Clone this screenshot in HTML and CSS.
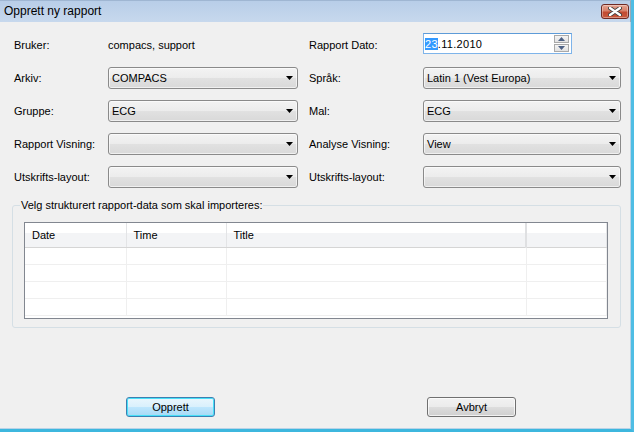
FILE: index.html
```html
<!DOCTYPE html>
<html lang="no">
<head>
<meta charset="utf-8">
<title>Opprett ny rapport</title>
<link rel="stylesheet" href="styles.css">
</head>
<body>
<div class="window">
  <div class="titlebar">
    <span class="title">Opprett ny rapport</span>
    <button class="close" aria-label="Lukk">
      <svg width="14" height="9" viewBox="0 0 14 9">
        <path d="M2 1 L12 8 M12 1 L2 8" stroke="#3a3a3a" stroke-width="4" stroke-linecap="round"/>
        <path d="M2 1 L12 8 M12 1 L2 8" stroke="#ffffff" stroke-width="2.4" stroke-linecap="round"/>
      </svg>
    </button>
  </div>
  <div class="content">
    <div class="form">
      <span class="label">Bruker:</span>
      <span class="value">compacs, support</span>
      <span class="label rlabel">Rapport Dato:</span>
      <div class="datefield">
        <span class="datetext"><span class="sel">23</span>.11.2010</span>
        <span class="spin">
          <span class="spinbtn"><svg width="7" height="4" viewBox="0 0 7 4"><polygon points="0,4 7,4 3.5,0" fill="#4d6185"/></svg></span>
          <span class="spinbtn"><svg width="7" height="4" viewBox="0 0 7 4"><polygon points="0,0 7,0 3.5,4" fill="#4d6185"/></svg></span>
        </span>
      </div>

      <span class="label">Arkiv:</span>
      <div class="combo"><span class="ctext">COMPACS</span><svg class="arrow" width="7" height="4" viewBox="0 0 7 4"><polygon points="0,0 7,0 3.5,4" fill="#000"/></svg></div>
      <span class="label rlabel">Språk:</span>
      <div class="combo"><span class="ctext">Latin 1 (Vest Europa)</span><svg class="arrow" width="7" height="4" viewBox="0 0 7 4"><polygon points="0,0 7,0 3.5,4" fill="#000"/></svg></div>

      <span class="label">Gruppe:</span>
      <div class="combo"><span class="ctext">ECG</span><svg class="arrow" width="7" height="4" viewBox="0 0 7 4"><polygon points="0,0 7,0 3.5,4" fill="#000"/></svg></div>
      <span class="label rlabel">Mal:</span>
      <div class="combo"><span class="ctext">ECG</span><svg class="arrow" width="7" height="4" viewBox="0 0 7 4"><polygon points="0,0 7,0 3.5,4" fill="#000"/></svg></div>

      <span class="label">Rapport Visning:</span>
      <div class="combo"><span class="ctext"></span><svg class="arrow" width="7" height="4" viewBox="0 0 7 4"><polygon points="0,0 7,0 3.5,4" fill="#000"/></svg></div>
      <span class="label rlabel">Analyse Visning:</span>
      <div class="combo"><span class="ctext">View</span><svg class="arrow" width="7" height="4" viewBox="0 0 7 4"><polygon points="0,0 7,0 3.5,4" fill="#000"/></svg></div>

      <span class="label">Utskrifts-layout:</span>
      <div class="combo"><span class="ctext"></span><svg class="arrow" width="7" height="4" viewBox="0 0 7 4"><polygon points="0,0 7,0 3.5,4" fill="#000"/></svg></div>
      <span class="label rlabel">Utskrifts-layout:</span>
      <div class="combo"><span class="ctext"></span><svg class="arrow" width="7" height="4" viewBox="0 0 7 4"><polygon points="0,0 7,0 3.5,4" fill="#000"/></svg></div>
    </div>

    <fieldset class="group">
      <legend>Velg strukturert rapport-data som skal importeres:</legend>
      <div class="list">
        <table>
          <colgroup><col class="c1"><col class="c2"><col class="c3"><col class="c4"></colgroup>
          <thead><tr><th>Date</th><th>Time</th><th>Title</th><th></th></tr></thead>
          <tbody>
            <tr><td></td><td></td><td></td><td></td></tr>
            <tr><td></td><td></td><td></td><td></td></tr>
            <tr><td></td><td></td><td></td><td></td></tr>
            <tr><td></td><td></td><td></td><td></td></tr>
          </tbody>
        </table>
      </div>
    </fieldset>

    <div class="actions">
      <button class="btn default">Opprett</button>
      <button class="btn">Avbryt</button>
    </div>
  </div>
</div>
</body>
</html>
```

FILE: styles.css
```css
* { box-sizing: border-box; }
html, body { margin: 0; padding: 0; }
body {
  width: 634px;
  height: 432px;
  overflow: hidden;
  font-family: "Liberation Sans", Arial, sans-serif;
  font-size: 11px;
  color: #000;
  background: #f0f0f0;
}
.window {
  width: 634px;
  height: 432px;
  display: flex;
  flex-direction: column;
  background: #f0f0f0;
  border-right: 3px solid #4fbde4;
  border-bottom: 3px solid #3db7de;
  box-shadow: inset -1px -1px 0 #b9d3e8;
}
.titlebar {
  height: 22px;
  flex: 0 0 22px;
  display: flex;
  align-items: flex-start;
  justify-content: space-between;
  padding-left: 4px;
  background: linear-gradient(#b8cee8, #c7d8ed);
  border-top: 1px solid #9fb6d2;
  border-right: 1px solid #9aa9b8;
}
.title {
  font-size: 12px;
  line-height: 20px;
  color: #000;
}
.close {
  margin: 3px 1px 0 0;
  width: 28px;
  height: 15px;
  padding: 0;
  border: 1px solid #6f2a24;
  border-radius: 3px;
  background: linear-gradient(#e4a593 0%, #d7806a 45%, #c24a31 55%, #c9593e 100%);
  display: flex;
  align-items: center;
  justify-content: center;
  box-shadow: inset 0 0 0 1px rgba(255,255,255,0.35);
}
.content {
  flex: 1;
  display: flex;
  flex-direction: column;
}
.form {
  display: grid;
  grid-template-columns: 94px 190px 11px 114px 198px;
  grid-auto-rows: 22px;
  row-gap: 11px;
  align-items: center;
  padding: 12px 0 0 14px;
}
.rlabel { grid-column: 4; }
.label, .value { white-space: nowrap; }
.datefield {
  height: 21px;
  align-self: start;
  display: flex;
  align-items: center;
  justify-content: space-between;
  background: #fff;
  border: 1px solid #7eb4ea;
  border-top-color: #5d9bd8;
  padding-left: 1px;
  margin-top: -1px;
  width: 149px;
}
.datetext { font-size: 11px; letter-spacing: 0.3px; }
.sel { background: #3399ff; color: #fff; }
.spin {
  display: flex;
  flex-direction: column;
  gap: 1px;
  margin-right: 2px;
}
.spinbtn {
  width: 15px;
  height: 8px;
  border: 1px solid #a9a9a9;
  background: linear-gradient(#f4f4f4, #e2e2e2);
  display: flex;
  align-items: center;
  justify-content: center;
}
.combo {
  height: 22px;
  display: flex;
  align-items: center;
  justify-content: space-between;
  border: 1px solid #8a8a8a;
  border-radius: 3px;
  background: linear-gradient(#f3f3f3 0%, #ececec 50%, #e1e1e1 51%, #d9d9d9 100%);
  box-shadow: inset 0 0 0 1px rgba(255,255,255,0.6);
  padding: 0 4px 0 3px;
}
.ctext { white-space: nowrap; }
.arrow { flex: none; }
.group {
  margin: 11px 10px 0 12px;
  padding: 10px 12px 8px 11px;
  border: 1px solid #d5dfe5;
  border-radius: 3px;
  min-width: 0;
}
.group legend {
  margin-left: -4px;
  padding: 0 1px;
  font-size: 11px;
  line-height: 13px;
}
.list {
  height: 97px;
  background: #fff;
  border: 1px solid #828790;
  overflow: hidden;
}
.list table {
  width: 100%;
  table-layout: fixed;
  border-collapse: collapse;
}
.c1 { width: 101px; }
.c2 { width: 100px; }
.c3 { width: 300px; }
.list th {
  height: 24px;
  padding: 0 0 0 7px;
  text-align: left;
  font-weight: normal;
  background: linear-gradient(#ffffff 0%, #ffffff 40%, #f3f4f6 41%, #f3f4f6 100%);
  border-right: 1px solid #e3e4e6;
  border-bottom: 1px solid #d5d5d5;
}
.list th:nth-child(3) { border-right: 2px solid #dfe0e2; }
.list td {
  height: 17px;
  padding: 0;
  border-right: 1px solid #efefef;
  border-bottom: 1px solid #efefef;
}
.actions {
  display: flex;
  gap: 212px;
  padding-left: 126px;
  margin-top: 69px;
}
.btn {
  width: 89px;
  height: 20px;
  padding: 0;
  font-family: "Liberation Sans", Arial, sans-serif;
  font-size: 11px;
  color: #000;
  border: 1px solid #707070;
  border-radius: 3px;
  background: linear-gradient(#f2f2f2 0%, #ebebeb 50%, #dddddd 51%, #cfcfcf 100%);
  box-shadow: inset 0 0 0 1px rgba(255,255,255,0.7);
}
.btn.default {
  border-color: #3c7fb1;
  background: linear-gradient(#eaf6fd 0%, #d9f0fc 50%, #bee6fd 51%, #a7d9f5 100%);
  box-shadow: inset 0 0 0 1px #48e0f8;
}
```
